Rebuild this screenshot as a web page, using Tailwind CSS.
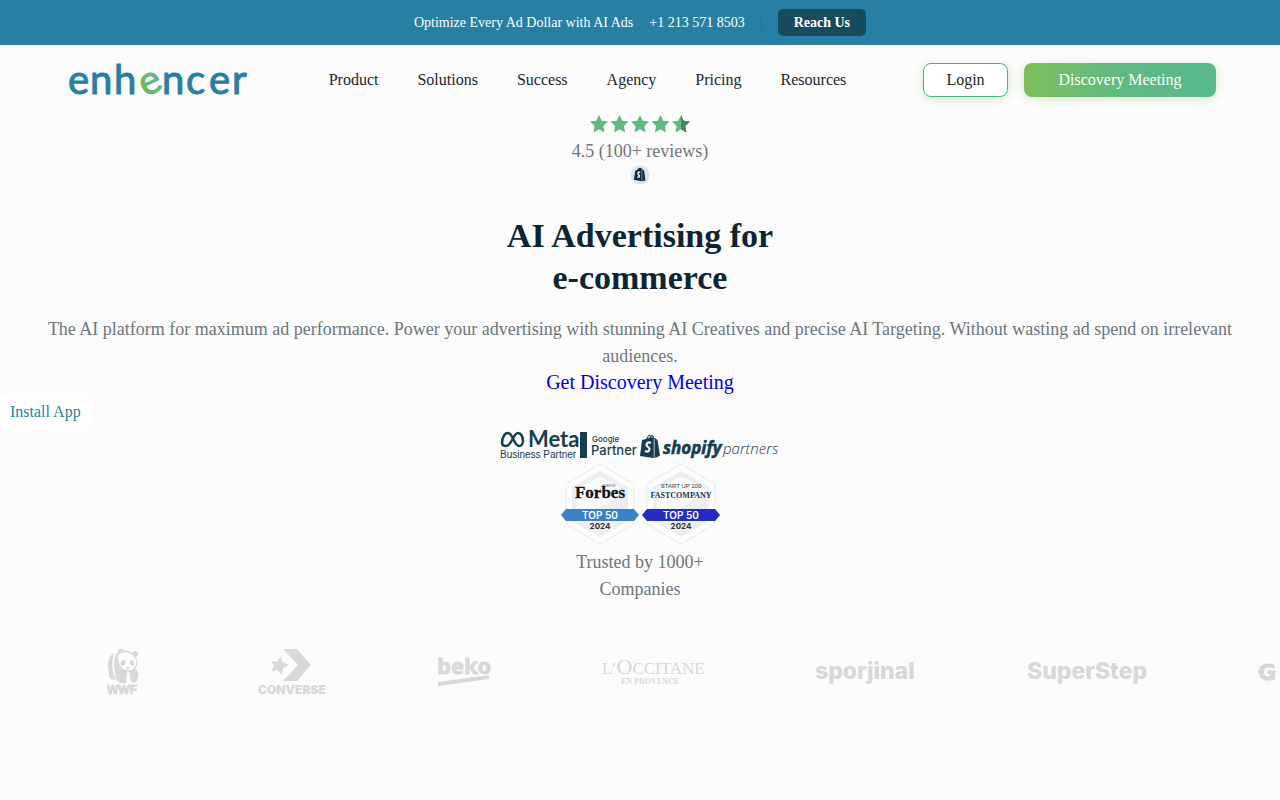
<!DOCTYPE html>
<html lang="en">
<head>
  <meta charset="UTF-8" />
  <meta name="viewport" content="width=device-width, initial-scale=1.0" />
  <title>Enhencer - AI Advertising for e-commerce</title>
  <script src="https://cdn.jsdelivr.net/npm/@tailwindcss/browser@4"></script>
</head>
<body class="bg-[#fbfbfb] font-['Liberation_Serif',serif] text-base text-[#212529] overflow-x-hidden">

  <!-- Announcement bar -->
  <div class="bg-[#2780a3] h-[45px] flex items-center justify-center text-sm text-white">
    <span>Optimize Every Ad Dollar with AI Ads</span>
    <a href="tel:+12135718503" class="ml-4">+1 213 571 8503</a>
    <span class="w-px h-[15px] mx-4 bg-[#23708f]"></span>
    <a href="#" class="bg-[#174a5c] rounded-[5px] px-4 h-[27px] flex items-center font-bold">Reach Us</a>
  </div>

  <div class="bg-[#fcfcfc]">
    <!-- Header -->
    <header class="h-[70px] pl-[68px] pr-16 flex items-center justify-between">
      <a href="#" aria-label="enhencer">
        <svg class="w-[184px] h-10 overflow-visible" viewBox="0 0 184 40" font-family="Lato, sans-serif" font-size="40" fill="#2780a3" stroke="#2780a3" stroke-linejoin="round">
          <defs>
            <linearGradient id="leaf" x1="0" x2="1"><stop offset="0" stop-color="#73b944" /><stop offset=".5" stop-color="#5fb981" /></linearGradient>
          </defs>
          <text x="0 22 46" y="34">enh</text>
          <text x="72" y="34" fill="url(#leaf)" stroke="url(#leaf)" transform="rotate(-25 82 24)">e</text>
          <text x="94 118 141 164" y="34">ncer</text>
        </svg>
      </a>
      <nav class="flex gap-[39px]">
        <a href="#">Product</a>
        <a href="#">Solutions</a>
        <a href="#">Success</a>
        <a href="#">Agency</a>
        <a href="#">Pricing</a>
        <a href="#">Resources</a>
      </nav>
      <div class="flex gap-4">
        <a href="#" class="w-[85px] h-[34px] flex items-center justify-center rounded-lg border border-[#46b384] bg-white shadow-[0_2px_8px_rgba(115,185,68,0.3)]">Login</a>
        <a href="#" class="w-48 h-[34px] flex items-center justify-center rounded-lg text-white bg-linear-to-r from-[#7dc05b] via-[#5fb981] to-[#58b98b] shadow-[0_2px_8px_rgba(115,185,68,0.3)]">Discovery Meeting</a>
      </div>
    </header>

    <!-- Hero -->
    <main class="flex flex-col items-center text-center text-lg leading-[27px] text-[#6c757d]">
      <svg class="w-[100px] h-[18px]" viewBox="0 0 100 18" fill="#5fb981">
        <defs><path id="star" d="M9 0l2.700 5.800 6.300.8-4.600 4.400 1.100 6.400L9 14.300l-5.500 3.100L4.600 11 0 6.600l6.300-.8z" /></defs>
        <use href="#star" /><use href="#star" x="20.5" /><use href="#star" x="41" /><use href="#star" x="61.5" /><use href="#star" x="82" />
        <path fill="#438760" d="M91 0l2.700 5.800 6.300.8-4.600 4.400 1.100 6.400L91 14.300z" />
      </svg>
      <p class="mt-[5px]">4.5 (100+ reviews)</p>
      <svg class="size-5" viewBox="0 0 20 20">
        <circle cx="10" cy="10" r="9.5" fill="#dfe3e9" />
        <path fill="#0f2a38" d="M5.300 5.500l2-.6C7.800 3.300 9 2.600 10 3.100c1-.2 1.600.3 1.900 1.200l.8.1 1.400 1.300 1.300 9.800-3.700.8-7.800-1.500z" />
        <path d="M10.200 7.300C7.800 6.500 7.200 8.900 8.700 9.800c1.600 1 .6 3-1.400 2" fill="none" stroke="#fff" stroke-width="1.4" />
        <path d="M11.900 5v11" stroke="#dfe3e9" stroke-width=".5" />
      </svg>

      <h1 class="mt-[30px] text-[34px] leading-[42px] font-bold text-[#0f2432]">AI Advertising for<br />e-commerce</h1>

      <p class="mt-[17px] px-8">The AI platform for maximum ad performance. Power your advertising with stunning AI Creatives and precise AI Targeting. Without wasting ad spend on irrelevant audiences.</p>
      <a href="#" class="text-xl leading-6 text-[#0000ee]">Get Discovery Meeting</a>

      <!-- Partner logos -->
      <div class="mt-[37px] flex">
        <svg class="w-20 h-[30px] overflow-visible" viewBox="0 0 80 30" fill="#173d50">
          <path d="M2 12C2 6 5 2 8 2c5 0 6 13 11 13 2 0 4-2 4-5 0-4-2-8-5-8-5 0-6 13-12 13-3 0-4-1-4-3z" fill="none" stroke="#173d50" stroke-width="2.5" />
          <text x="28" y="16" font-family="Lato, sans-serif" font-size="22" font-weight="bold">Meta</text>
          <text x="0" y="27" font-family="Liberation Sans, sans-serif" font-size="10">Business Partner</text>
        </svg>
        <svg class="w-[60px] h-[30px] overflow-visible" viewBox="0 0 60 30" fill="#173d50" font-family="Inter, sans-serif" font-weight="500">
          <rect y="1" width="7" height="26" />
          <text x="12" y="11" font-size="8">Google</text>
          <text x="11" y="24" font-size="13">Partner</text>
        </svg>
        <svg class="w-[140px] h-[30px] overflow-visible" viewBox="0 0 140 30" fill="#173d50">
          <path d="M2 9l4-1c1-4 3-5 5-4 2 0 3 1 3 3l2 1 2 18-5 1L0 25z" />
          <path d="M14.500 7l3 2 2.500 16-5 1z" />
          <path d="M14.200 8v18" stroke="#fcfcfc" stroke-width=".7" />
          <path d="M5.500 8C7 4.500 9 4 9.500 7M8 7.500C9 4 12 4 12 7" fill="none" stroke="#fcfcfc" stroke-width=".8" />
          <path d="M11 12C7 10 5 14 8 16c3 2 1 6-3 4" fill="none" stroke="#fcfcfc" stroke-width="2" />
          <text x="23" y="23" font-family="Open Sans, sans-serif" font-size="17" font-weight="700" font-style="italic" stroke="#173d50" stroke-width=".5">shopify</text>
          <text x="83" y="23" font-family="Open Sans, sans-serif" font-size="15" font-weight="300" font-style="italic">partners</text>
        </svg>
      </div>

      <!-- Awards -->
      <div class="mt-0.5 flex gap-[3px]">
        <svg class="w-[78px] h-[82px]" viewBox="0 0 78 82" text-anchor="middle">
          <path d="M39 1l34 20v40L39 81 5 61V21z" fill="#fefefe" stroke="#e7e9ea" />
          <path d="M39 8l28 16v34L39 74 11 58V24z" fill="#eceeef" />
          <path d="M39 13l24 14v3L20 56l-5-3V27z" fill="#fafbfb" />
          <text x="48" y="24" font-family="Liberation Sans, sans-serif" font-size="3" fill="#555">TÜRKİYE</text>
          <text x="39" y="35" font-family="Liberation Serif, serif" font-size="17" font-weight="bold" fill="#111" stroke="#111" stroke-width=".3">Forbes</text>
          <path d="M5 46h68l5 6-5 6H5l-5-6z" fill="#3b82c6" />
          <text x="39" y="56" font-family="Inter, sans-serif" font-size="10" font-weight="600" fill="#fff">TOP 50</text>
          <text x="39" y="66" font-family="Inter, sans-serif" font-size="8" font-weight="bold" fill="#333">2024</text>
        </svg>
        <svg class="w-[78px] h-[82px]" viewBox="0 0 78 82" text-anchor="middle">
          <path d="M39 1l34 20v40L39 81 5 61V21z" fill="#fefefe" stroke="#e7e9ea" />
          <path d="M39 8l28 16v34L39 74 11 58V24z" fill="#eceeef" />
          <path d="M39 13l24 14v3L20 56l-5-3V27z" fill="#fafbfb" />
          <text x="39" y="25" font-family="Liberation Sans, sans-serif" font-size="6" fill="#173d50">START UP 100</text>
          <text x="39" y="35" font-family="Liberation Serif, serif" font-size="8" font-weight="bold" fill="#173d50">FASTCOMPANY</text>
          <path d="M5 46h68l5 6-5 6H5l-5-6z" fill="#262bc2" />
          <text x="39" y="56" font-family="Inter, sans-serif" font-size="10" font-weight="600" fill="#fff">TOP 50</text>
          <text x="39" y="66" font-family="Inter, sans-serif" font-size="8" font-weight="bold" fill="#333">2024</text>
        </svg>
      </div>
      <p class="mt-1">Trusted by 1000+<br />Companies</p>
    </main>

    <!-- Customer logos -->
    <section class="pt-[45px] pb-11 pl-[107px] flex gap-28 overflow-hidden">
      <svg class="w-8 h-12 shrink-0" viewBox="0 0 32 48" fill="#d8d8d8">
        <path d="M7 5C3 7 1 12 1 18c0 3 1 5 1 8 0 5 4 7 7 5-4-6-5-16-2-26z" />
        <path d="M10 5c4-3 12-4 16 1 4 3 5 8 4 12l-2 3c4 2 4 6 2 11-1 3-5 3-6 1l-2-6c-2 4-3 5-3 8-5 1-10-1-10-5C7 22 6 10 10 5z" />
        <circle cx="14" cy="3.500" r="3" /><circle cx="28" cy="6" r="3" />
        <g fill="#fcfcfc">
          <path d="M11 7c3-3 10-4 14 0 4 2 5 7 4 10-2 4-6 6-10 5-5-1-9-9-8-15z" />
          <path d="M20 23l3 2-2 9-2 0z" />
        </g>
        <ellipse cx="16" cy="15" rx="2.200" ry="3" transform="rotate(30 16 15)" />
        <ellipse cx="25" cy="15" rx="2" ry="3" transform="rotate(-20 25 15)" />
        <path d="M18 19h5l-2 2.500z" />
        <text x="0" y="46" font-family="Liberation Sans, sans-serif" font-size="12" font-weight="bold" stroke="#d8d8d8" stroke-width=".7">WWF</text>
      </svg>
      <svg class="ml-[7px] w-[68px] h-12 shrink-0 overflow-visible" viewBox="0 0 68 48" fill="#d8d8d8">
        <path d="M25 1h14l14 16-14 16H25l15-16z" />
        <path d="M23 8l1 6 7 3-6 3-1 7-5-5-6 2 3-6-3-5 6 1z" />
        <text x="0" y="46" font-family="Inter, sans-serif" font-size="12" font-weight="900">CONVERSE</text>
      </svg>
      <svg class="w-[53px] h-12 shrink-0 overflow-visible" viewBox="0 0 53 48" fill="#d8d8d8">
        <text x="-1" y="26" font-family="Open Sans, sans-serif" font-size="22" font-weight="700" stroke="#d8d8d8" stroke-width=".8">beko</text>
        <path d="M0 34l51-7v4L0 38z" />
      </svg>
      <svg class="w-[101px] h-12 shrink-0 overflow-visible" viewBox="0 0 101 48" fill="#d8d8d8" font-family="Liberation Serif, serif">
        <text x="-1" y="26" font-size="17">L’<tspan font-size="22">O</tspan>CCITANE</text>
        <text x="18" y="36" font-size="8" font-weight="bold">EN PROVENCE</text>
      </svg>
      <svg class="w-[98px] h-12 shrink-0 overflow-visible" viewBox="0 0 98 48" fill="#d8d8d8">
        <text x="-1" y="31" font-family="Inter, sans-serif" font-size="23" font-weight="800">sporjinal</text>
      </svg>
      <svg class="ml-0.5 w-[120px] h-12 shrink-0 overflow-visible" viewBox="0 0 120 48" fill="#d8d8d8">
        <text x="-1" y="31" font-family="Inter, sans-serif" font-size="23" font-weight="800">SuperStep</text>
      </svg>
      <svg class="w-20 h-12 shrink-0 overflow-visible" viewBox="0 0 80 48" fill="#d8d8d8">
        <text x="-2" y="32" font-family="DejaVu Sans, sans-serif" font-size="22" font-weight="bold" stroke="#d8d8d8">G</text>
      </svg>
    </section>
  </div>

  <a href="#" class="fixed left-0 top-[393px] h-[38px] px-2.5 flex items-center rounded-lg bg-white text-[#2780a3]">Install App</a>
</body>
</html>
